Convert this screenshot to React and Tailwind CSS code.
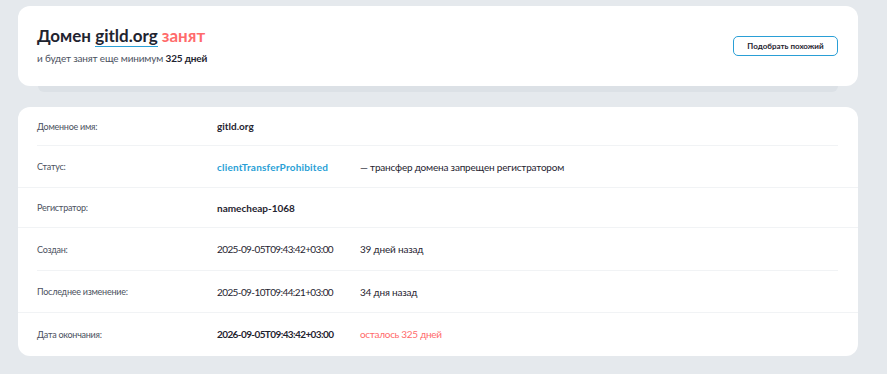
const rows = [
  { label: 'Доменное имя:', value: 'gitld.org', valueClass: 'font-bold text-[#1f2430]', h: 'h-[39px]', line: 'inset' },
  {
    label: 'Статус:',
    value: 'clientTransferProhibited',
    valueClass: 'font-bold tracking-[0.2px] text-[#2a9fd6]',
    extra: '— трансфер домена запрещен регистратором',
    h: 'h-[42px]',
    line: 'full',
  },
  { label: 'Регистратор:', value: 'namecheap-1068', valueClass: 'font-bold text-[#1f2430]', h: 'h-[40px]', line: 'full' },
  {
    label: 'Создан:',
    value: '2025-09-05T09:43:42+03:00',
    valueClass: 'tracking-[-0.6px] text-[#1f2430]',
    extra: '39 дней назад',
    h: 'h-[43px]',
    line: 'inset',
  },
  {
    label: 'Последнее изменение:',
    value: '2025-09-10T09:44:21+03:00',
    valueClass: 'tracking-[-0.6px] text-[#1f2430]',
    extra: '34 дня назад',
    h: 'h-[42px]',
    line: 'full',
  },
  {
    label: 'Дата окончания:',
    value: '2026-09-05T09:43:42+03:00',
    valueClass: 'font-bold tracking-[-0.6px] text-[#1f2430]',
    extra: 'осталось 325 дней',
    extraClass: 'tracking-[-0.3px] text-[#ff6b6b]',
    h: 'h-[43px]',
  },
]

function InfoRow({ row }) {
  return (
    <div className={`relative flex items-center px-[19px] ${row.h}`}>
      <div className="w-[180px] text-[9px] tracking-[-0.25px] text-[#4b5160]">{row.label}</div>
      <div className={`w-[143px] text-[10px] ${row.valueClass}`}>{row.value}</div>
      {row.extra && (
        <div className={`text-[10px] ${row.extraClass || 'tracking-[-0.2px] text-[#1f2430]'}`}>{row.extra}</div>
      )}
      {row.line === 'inset' && <div className="absolute bottom-0 left-[19px] right-[20px] h-px bg-[#f1f3f5]" />}
      {row.line === 'full' && <div className="absolute bottom-0 left-0 right-0 h-px bg-[#f1f3f5]" />}
    </div>
  )
}

export default function App() {
  return (
    <div
      className="min-h-[374px] w-[887px] bg-[#e5e9ed] pt-[6px] pl-[18px] pr-[29px]"
      style={{ fontFamily: 'Lato, "Open Sans", sans-serif' }}
    >
      <div className="flex h-[80px] items-center justify-between rounded-[12px] bg-white pl-[19px] pr-[20px]">
        <div className="-mt-[2px]">
          <h1 className="text-[17px] font-bold leading-[22px] text-[#1f2430]">
            Домен{' '}
            <span className="border-b-[1.5px] border-[#2a9fd6]">gitld.org</span>{' '}
            <span className="text-[#ff6b6b]">занят</span>
          </h1>
          <p className="mt-[4px] text-[10px] tracking-[-0.17px] text-[#4b5160]">
            и будет занят еще минимум <span className="font-bold text-[#1f2430]">325 дней</span>
          </p>
        </div>
        <button className="h-[20px] w-[105px] rounded-[5px] border border-[#2a9fd6] bg-white text-[8px] font-bold text-[#1f2430]">
          Подобрать похожий
        </button>
      </div>
      <div className="mx-[20px] h-[6px] rounded-b-[6px] bg-[#dce1e6]" />

      <div className="mt-[15px] overflow-hidden rounded-[12px] bg-white">
        {rows.map((row) => (
          <InfoRow key={row.label} row={row} />
        ))}
      </div>
    </div>
  )
}
